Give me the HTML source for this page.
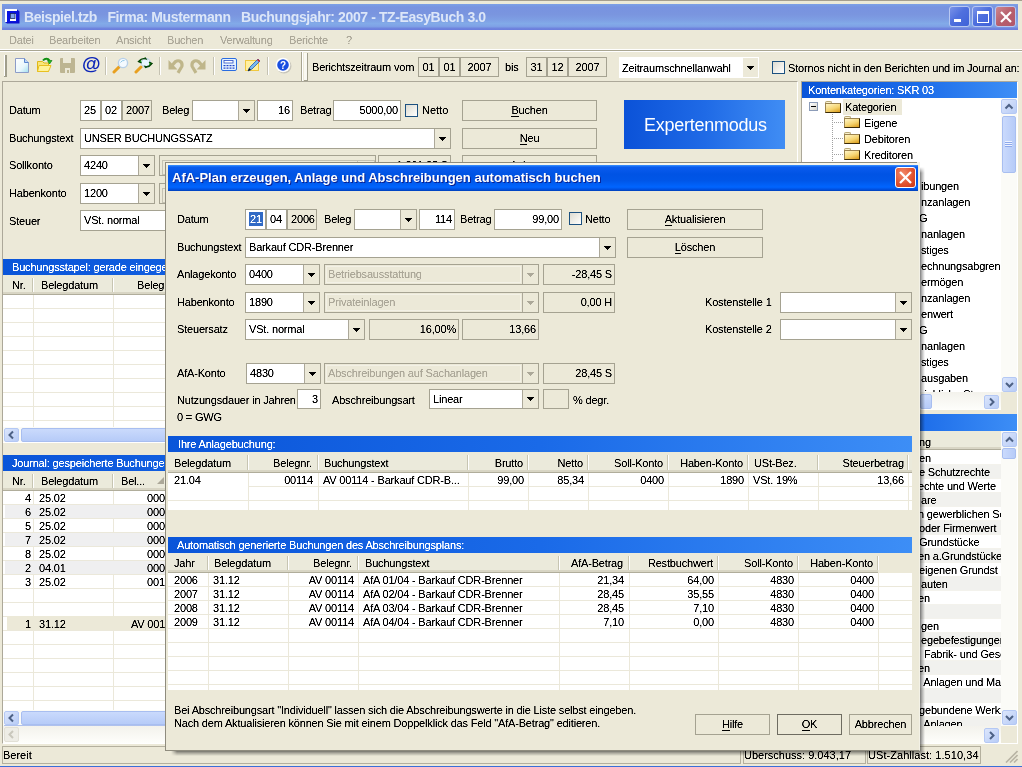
<!DOCTYPE html><html><head><meta charset="utf-8"><style>
*{margin:0;padding:0}
html,body{width:1022px;height:767px;overflow:hidden;background:#ECE9D8}
body{position:relative;font:11px "Liberation Sans",sans-serif;color:#000}
div{position:absolute}
.t{white-space:pre;line-height:13px;letter-spacing:-0.18px;filter:url(#thr)}
#root{left:0;top:0;width:1022px;height:767px;overflow:hidden;will-change:transform;background:#ECE9D8}
.fld{border:1px solid #A5A291;box-sizing:border-box}
.btn{border:1px solid #A5A291;box-sizing:border-box}
.btn.def{border-color:#6E6C61}
.tri{width:0;height:0;border-left:4px solid transparent;border-right:4px solid transparent;border-top:4px solid #000}
.chk{border:1px solid #1C5180;box-sizing:border-box;background:linear-gradient(135deg,#DCDBD2 0%,#F2F1EB 60%,#fff 100%)}
.bb{background:linear-gradient(90deg,#0A55D9 0%,#1A6AE8 50%,#3D8EF6 100%)}
.hdr{background:#EBEADB;border-bottom:1px solid #B0AD9B;box-sizing:border-box;box-shadow:inset 0 -2px 0 #D8D5C4}
u{text-decoration:none;border-bottom:1px solid #000}

.sbtn{background:linear-gradient(135deg,#DCE6FC,#B8CCF6);border:1px solid #B4C8F4;border-radius:2px;box-sizing:border-box}
.sthumb{background:linear-gradient(180deg,#CADAFC,#B6CBF8);border:1px solid #A8BEF0;border-radius:2px;box-sizing:border-box}
.sthumbv{background:linear-gradient(90deg,#CADAFC,#B6CBF8);border:1px solid #A8BEF0;border-radius:2px;box-sizing:border-box}
</style></head><body><svg width="0" height="0" style="position:absolute"><filter id="thr"><feComponentTransfer><feFuncA type="linear" slope="1.8" intercept="-0.25"/></feComponentTransfer></filter></svg><div id="root"><div style="left:0px;top:0px;width:1022px;height:1px;background:#A59E8E"></div>
<div style="left:2px;top:4px;width:1016px;height:26px;background:linear-gradient(180deg,#7CA0E6 0%,#7893E0 12%,#7A95DF 40%,#7E9FE4 62%,#82AAE8 75%,#7FA2E6 86%,#6F84DE 94%,#6A7CDC 100%)"></div>
<svg style="position:absolute;left:4px;top:8px" width="16" height="16" viewBox="0 0 16 16"><path d="M13 1.5L15.5 3.5V15.5H3L1 14H13Z" fill="#0A0ED0"/><rect x="1" y="1" width="12" height="13" fill="#fff"/><rect x="3" y="3" width="10" height="11" fill="#0A14E0"/><rect x="6" y="6" width="6" height="7" fill="#fff"/><rect x="6.5" y="5.5" width="4.5" height="5" fill="#7FA0EC" stroke="#1A2860" stroke-width=".8"/></svg>
<div style="left:24px;top:9px;white-space:pre;font:bold 14px 'Liberation Sans';letter-spacing:-0.4px;line-height:16px;color:#DCE6F8">Beispiel.tzb   Firma: Mustermann   Buchungsjahr: 2007 - TZ-EasyBuch 3.0</div>
<div style="left:949px;top:6px;width:21px;height:21px;background:linear-gradient(135deg,#7A93E8 0%,#4F70DE 45%,#3F62D8 100%);border:1px solid #B8C8F2;border-radius:3px;box-sizing:border-box"></div>
<div style="left:972px;top:6px;width:21px;height:21px;background:linear-gradient(135deg,#7A93E8 0%,#4F70DE 45%,#3F62D8 100%);border:1px solid #B8C8F2;border-radius:3px;box-sizing:border-box"></div>
<div style="left:995px;top:6px;width:21px;height:21px;background:linear-gradient(135deg,#CC8890 0%,#B85F6C 50%,#B0586A 100%);border:1px solid #B8C8F2;border-radius:3px;box-sizing:border-box"></div>
<div style="left:954px;top:19px;width:7px;height:3px;background:#fff"></div>
<div style="left:977px;top:11px;width:12px;height:12px;border:1px solid #fff;border-top-width:3px;box-sizing:border-box"></div>
<svg style="position:absolute;left:1000px;top:11px" width="12" height="12" viewBox="0 0 12 12"><g stroke="#fff" stroke-width="2.2"><line x1="1" y1="1" x2="11" y2="11"/><line x1="11" y1="1" x2="1" y2="11"/></g></svg>
<div class="t" style="left:9px;top:34px;color:#ACA899">Datei</div>
<div class="t" style="left:49px;top:34px;color:#ACA899">Bearbeiten</div>
<div class="t" style="left:116px;top:34px;color:#ACA899">Ansicht</div>
<div class="t" style="left:167px;top:34px;color:#ACA899">Buchen</div>
<div class="t" style="left:220px;top:34px;color:#ACA899">Verwaltung</div>
<div class="t" style="left:289px;top:34px;color:#ACA899">Berichte</div>
<div class="t" style="left:346px;top:34px;color:#ACA899">?</div>
<div style="left:0px;top:49px;width:1022px;height:1px;background:#fff"></div>
<div style="left:0px;top:50px;width:1022px;height:1px;background:#A9A692"></div>
<div style="left:0px;top:51px;width:1022px;height:1px;background:#fff"></div>
<div style="left:4px;top:55px;width:1px;height:21px;background:#fff"></div>
<div style="left:5px;top:55px;width:2px;height:22px;background:#A09E8C"></div>
<div style="left:4px;top:76px;width:3px;height:1px;background:#A09E8C"></div>
<div style="left:105px;top:57px;width:1px;height:18px;background:#C5C2B2"></div>
<div style="left:106px;top:57px;width:1px;height:18px;background:#fff"></div>
<div style="left:159px;top:57px;width:1px;height:18px;background:#C5C2B2"></div>
<div style="left:160px;top:57px;width:1px;height:18px;background:#fff"></div>
<div style="left:213px;top:57px;width:1px;height:18px;background:#C5C2B2"></div>
<div style="left:214px;top:57px;width:1px;height:18px;background:#fff"></div>
<div style="left:267px;top:57px;width:1px;height:18px;background:#C5C2B2"></div>
<div style="left:268px;top:57px;width:1px;height:18px;background:#fff"></div>
<div style="left:301px;top:52px;width:1px;height:29px;background:#A8A590"></div>
<div style="left:302px;top:52px;width:1px;height:29px;background:#fff"></div>
<div style="left:304px;top:53px;width:3px;height:27px;background:#FAF9F2;border-right:1px solid #A09E8C;border-bottom:1px solid #A09E8C;box-sizing:content-box"></div>
<svg style="position:absolute;left:14px;top:57px" width="16" height="17" viewBox="0 0 16 17"><defs><linearGradient id="gd" x1="0" y1="0" x2="1" y2="1"><stop offset="0" stop-color="#fff"/><stop offset=".6" stop-color="#E8F6FC"/><stop offset="1" stop-color="#9EE0F0"/></linearGradient></defs><path d="M1.5 1.5H10.5L14.5 5.5V15.5H1.5Z" fill="url(#gd)" stroke="#8C9CC8"/><path d="M10.5 1.5V5.5H14.5" fill="#BCD4F4" stroke="#5A86D0"/></svg>
<svg style="position:absolute;left:36px;top:57px" width="17" height="16" viewBox="0 0 17 16"><path d="M1.5 4.5H6.5L8 6H12.5V14.5H1.5Z" fill="#F8E67A" stroke="#E0B818"/><path d="M3 8.5H15L12.5 14.5H1.5Z" fill="#FFF39A" stroke="#E8C020"/><path d="M7 3.5C9 1 12 1 13.5 3.5" fill="none" stroke="#109010" stroke-width="2"/><path d="M11.5 3.5H16L13.5 7Z" fill="#20C020" stroke="#108010" stroke-width=".7"/></svg>
<svg style="position:absolute;left:60px;top:58px" width="15" height="15" viewBox="0 0 15 15"><path d="M0 1Q0 0 1 0H3V5H11V0H14Q15 0 15 1V14Q15 15 14 15H1Q0 15 0 14Z" fill="#BDB592"/><path d="M5 10H10V15H5Z" fill="#ECE9D8"/><path d="M7 12H9V15H7Z" fill="#BDB592"/></svg>
<div style="left:82px;top:54px;font:bold 19px 'Liberation Sans';color:#0B24B8;line-height:20px;letter-spacing:0">@</div>
<svg style="position:absolute;left:112px;top:57px" width="17" height="17" viewBox="0 0 17 17"><line x1="2" y1="15" x2="7" y2="10" stroke="#E8A020" stroke-width="3" stroke-linecap="round"/><circle cx="11" cy="6" r="4.6" fill="#F4FAFF" stroke="#B8D0E8" stroke-width="1.4"/><path d="M8.5 5.5Q10 3 12.5 3.5" stroke="#90C8E8" fill="none"/></svg>
<svg style="position:absolute;left:134px;top:57px" width="19" height="17" viewBox="0 0 19 17"><line x1="2" y1="15" x2="7" y2="10" stroke="#E8A020" stroke-width="3" stroke-linecap="round"/><circle cx="12" cy="6" r="4.6" fill="#E8F6FF" stroke="#B8D0E8" stroke-width="1"/><path d="M5 4Q8 0.5 12 2L11 0.5M7 2.5L4.5 4.5L7.5 6" fill="#18B018" stroke="#064006" stroke-width="1.3"/><path d="M17.5 7Q15 10.5 11 9.5L12 11M15.5 8.5L18 6.5L15 5" fill="#18B018" stroke="#064006" stroke-width="1.3"/></svg>
<svg style="position:absolute;left:168px;top:58px" width="16" height="16" viewBox="0 0 16 16"><path d="M0.5 2V11.5H9.5Z" fill="#BFB68A"/><path d="M3.5 8L7.5 3.6Q9.5 2.3 11.5 3Q14.8 4.5 13.8 8.5L10 14.8" fill="none" stroke="#BFB68A" stroke-width="3.2"/></svg>
<svg style="position:absolute;left:190px;top:58px" width="16" height="16" viewBox="0 0 16 16"><g transform="translate(16,0) scale(-1,1)"><path d="M0.5 2V11.5H9.5Z" fill="#BFB68A"/><path d="M3.5 8L7.5 3.6Q9.5 2.3 11.5 3Q14.8 4.5 13.8 8.5L10 14.8" fill="none" stroke="#BFB68A" stroke-width="3.2"/></g></svg>
<svg style="position:absolute;left:221px;top:58px" width="17" height="14" viewBox="0 0 17 14"><rect x=".5" y=".5" width="15" height="12" rx="1.5" fill="#E4F2FF" stroke="#2A6CE0"/><rect x="3" y="2.5" width="9" height="2.5" fill="#fff" stroke="#2A50C8" stroke-width=".8"/><g fill="#2244C8"><rect x="2.5" y="7" width="2" height="1.2"/><rect x="5.5" y="7" width="2" height="1.2"/><rect x="8.5" y="7" width="2" height="1.2"/><rect x="11.5" y="7" width="2" height="1.2"/><rect x="2.5" y="9.5" width="2" height="1.2"/><rect x="5.5" y="9.5" width="2" height="1.2"/><rect x="8.5" y="9.5" width="2" height="1.2"/><rect x="11.5" y="9.5" width="2" height="1.2"/></g></svg>
<svg style="position:absolute;left:245px;top:57px" width="16" height="16" viewBox="0 0 16 16"><rect x=".5" y="3.5" width="13" height="10" fill="#FFF0A0" stroke="#F0C840"/><path d="M3 14L5 10L13 2L15 4L7 12Z" fill="#7CB8F0" stroke="#2060B0" stroke-width=".8"/><path d="M12 3L13 2L15 4L14 5Z" fill="#E02020"/><path d="M3 14L4 11L6 13Z" fill="#101010"/></svg>
<svg style="position:absolute;left:275px;top:57px" width="17" height="17" viewBox="0 0 17 17"><circle cx="9" cy="9" r="7.5" fill="#888" opacity=".35"/><circle cx="8" cy="8" r="7.3" fill="#fff"/><circle cx="8" cy="8" r="5.8" fill="#1A4FE0"/><text x="8" y="11.6" font-family="Liberation Sans" font-weight="bold" font-size="10" fill="#fff" text-anchor="middle">?</text></svg>
<div class="t" style="left:312px;top:61px;">Berichtszeitraum vom</div>
<div class="fld" style="left:418px;top:57px;width:21px;height:20px;background:#ECE9D8;"></div>
<div class="t" style="left:418px;width:21px;text-align:center;top:61px;color:#000">01</div>
<div class="fld" style="left:439px;top:57px;width:21px;height:20px;background:#ECE9D8;"></div>
<div class="t" style="left:439px;width:21px;text-align:center;top:61px;color:#000">01</div>
<div class="fld" style="left:460px;top:57px;width:39px;height:20px;background:#ECE9D8;"></div>
<div class="t" style="left:460px;width:39px;text-align:center;top:61px;color:#000">2007</div>
<div class="t" style="left:505px;top:61px;">bis</div>
<div class="fld" style="left:526px;top:57px;width:21px;height:20px;background:#ECE9D8;"></div>
<div class="t" style="left:526px;width:21px;text-align:center;top:61px;color:#000">31</div>
<div class="fld" style="left:547px;top:57px;width:21px;height:20px;background:#ECE9D8;"></div>
<div class="t" style="left:547px;width:21px;text-align:center;top:61px;color:#000">12</div>
<div class="fld" style="left:568px;top:57px;width:39px;height:20px;background:#ECE9D8;"></div>
<div class="t" style="left:568px;width:39px;text-align:center;top:61px;color:#000">2007</div>
<div style="left:619px;top:57px;width:140px;height:21px;background:#fff"></div>
<div class="t" style="left:622px;top:62px;">Zeitraumschnellanwahl</div>
<div style="left:743px;top:58px;width:15px;height:19px;background:#ECE9D8"></div>
<div style="left:747px;top:66px;width:7px;height:1px;background:#000"></div>
<div style="left:748px;top:67px;width:5px;height:1px;background:#000"></div>
<div style="left:749px;top:68px;width:3px;height:1px;background:#000"></div>
<div style="left:750px;top:69px;width:1px;height:1px;background:#000"></div>
<div class="chk" style="left:772px;top:61px;width:13px;height:13px;"></div>
<div class="t" style="left:788px;top:62px;">Stornos nicht in den Berichten und im Journal an:</div>
<div style="left:2px;top:81px;width:796px;height:663px;border:1px solid #ACA899;border-right-color:#fff;border-bottom-color:#fff;box-sizing:border-box"></div>
<div class="t" style="left:9px;top:104px;">Datum</div>
<div class="fld" style="left:80px;top:100px;width:21px;height:21px;background:#fff;"></div>
<div class="t" style="left:84px;top:104px;color:#000">25</div>
<div class="fld" style="left:101px;top:100px;width:21px;height:21px;background:#fff;"></div>
<div class="t" style="left:105px;top:104px;color:#000">02</div>
<div class="fld" style="left:122px;top:100px;width:30px;height:21px;background:#ECE9D8;"></div>
<div class="t" style="left:126px;top:104px;color:#000">2007</div>
<div class="t" style="left:162px;top:104px;">Beleg</div>
<div class="fld" style="left:192px;top:100px;width:63px;height:21px;background:#fff;"></div>
<div style="left:238px;top:101px;width:16px;height:19px;background:#ECE9D8;border-left:1px solid #ACA899;box-sizing:border-box"></div>
<div style="left:243px;top:109px;width:7px;height:1px;background:#000"></div>
<div style="left:244px;top:110px;width:5px;height:1px;background:#000"></div>
<div style="left:245px;top:111px;width:3px;height:1px;background:#000"></div>
<div style="left:246px;top:112px;width:1px;height:1px;background:#000"></div>
<div class="fld" style="left:257px;top:100px;width:36px;height:21px;background:#fff;"></div>
<div class="t" style="right:732px;top:104px;color:#000">16</div>
<div class="t" style="left:300px;top:104px;">Betrag</div>
<div class="fld" style="left:333px;top:100px;width:68px;height:21px;background:#fff;"></div>
<div class="t" style="right:624px;top:104px;color:#000">5000,00</div>
<div class="chk" style="left:405px;top:104px;width:13px;height:13px;"></div>
<div class="t" style="left:422px;top:104px;letter-spacing:0">Netto</div>
<div class="btn" style="left:462px;top:100px;width:135px;height:21px;background:#ECE9D8;"></div>
<div class="t" style="left:462px;width:135px;text-align:center;top:104px;"><u>B</u>uchen</div>
<div style="left:624px;top:100px;width:161px;height:49px;background:linear-gradient(90deg,#0B52D8 0%,#1F6AE6 50%,#408DF4 100%)"></div>
<div style="left:644px;top:115px;white-space:pre;font:18px 'Liberation Sans';letter-spacing:-0.25px;line-height:20px;color:#fff">Expertenmodus</div>
<div class="t" style="left:9px;top:132px;">Buchungstext</div>
<div class="fld" style="left:80px;top:128px;width:371px;height:21px;background:#fff;"></div>
<div style="left:434px;top:129px;width:16px;height:19px;background:#ECE9D8;border-left:1px solid #ACA899;box-sizing:border-box"></div>
<div style="left:439px;top:137px;width:7px;height:1px;background:#000"></div>
<div style="left:440px;top:138px;width:5px;height:1px;background:#000"></div>
<div style="left:441px;top:139px;width:3px;height:1px;background:#000"></div>
<div style="left:442px;top:140px;width:1px;height:1px;background:#000"></div>
<div class="t" style="left:84px;top:132px;color:#000">UNSER BUCHUNGSSATZ</div>
<div class="btn" style="left:462px;top:128px;width:135px;height:21px;background:#ECE9D8;"></div>
<div class="t" style="left:462px;width:135px;text-align:center;top:132px;"><u>N</u>eu</div>
<div class="t" style="left:9px;top:159px;">Sollkonto</div>
<div class="fld" style="left:80px;top:155px;width:75px;height:21px;background:#fff;"></div>
<div style="left:138px;top:156px;width:16px;height:19px;background:#ECE9D8;border-left:1px solid #ACA899;box-sizing:border-box"></div>
<div style="left:143px;top:164px;width:7px;height:1px;background:#000"></div>
<div style="left:144px;top:165px;width:5px;height:1px;background:#000"></div>
<div style="left:145px;top:166px;width:3px;height:1px;background:#000"></div>
<div style="left:146px;top:167px;width:1px;height:1px;background:#000"></div>
<div class="t" style="left:84px;top:159px;color:#000">4240</div>
<div class="fld" style="left:159px;top:155px;width:217px;height:21px;background:#ECE9D8"></div>
<div style="left:162px;top:160px;width:194px;height:13px;border:1px solid #C5C2B2"></div>
<div style="left:357px;top:160px;width:16px;height:13px;border:1px solid #C5C2B2"></div>
<div class="fld" style="left:378px;top:155px;width:73px;height:21px;background:#ECE9D8;"></div>
<div class="t" style="right:574px;top:159px;color:#000">1.861,25 S</div>
<div class="btn" style="left:462px;top:155px;width:135px;height:21px;background:#ECE9D8;"></div>
<div class="t" style="left:462px;width:135px;text-align:center;top:159px;">Anlegen</div>
<div class="t" style="left:624px;top:160px;">Kostenstelle 1</div>
<div class="t" style="left:9px;top:187px;">Habenkonto</div>
<div class="fld" style="left:80px;top:183px;width:75px;height:21px;background:#fff;"></div>
<div style="left:138px;top:184px;width:16px;height:19px;background:#ECE9D8;border-left:1px solid #ACA899;box-sizing:border-box"></div>
<div style="left:143px;top:192px;width:7px;height:1px;background:#000"></div>
<div style="left:144px;top:193px;width:5px;height:1px;background:#000"></div>
<div style="left:145px;top:194px;width:3px;height:1px;background:#000"></div>
<div style="left:146px;top:195px;width:1px;height:1px;background:#000"></div>
<div class="t" style="left:84px;top:187px;color:#000">1200</div>
<div class="fld" style="left:159px;top:183px;width:217px;height:21px;background:#ECE9D8"></div>
<div style="left:162px;top:188px;width:11px;height:13px;border:1px solid #C5C2B2"></div>
<div class="t" style="left:9px;top:215px;">Steuer</div>
<div class="fld" style="left:80px;top:210px;width:221px;height:21px;background:#fff;"></div>
<div style="left:284px;top:211px;width:16px;height:19px;background:#ECE9D8;border-left:1px solid #ACA899;box-sizing:border-box"></div>
<div style="left:289px;top:219px;width:7px;height:1px;background:#000"></div>
<div style="left:290px;top:220px;width:5px;height:1px;background:#000"></div>
<div style="left:291px;top:221px;width:3px;height:1px;background:#000"></div>
<div style="left:292px;top:222px;width:1px;height:1px;background:#000"></div>
<div class="t" style="left:84px;top:214px;color:#000">VSt. normal</div>
<div class="bb" style="left:3px;top:259px;width:794px;height:16px;"></div>
<div class="t" style="left:12px;top:261px;color:#fff">Buchungsstapel: gerade eingegebene Buchungen</div>
<div class="hdr" style="left:3px;top:275px;width:794px;height:20px;"></div>
<div style="left:32px;top:278px;width:1px;height:14px;background:#C7C5B2"></div>
<div style="left:33px;top:278px;width:1px;height:14px;background:#fff"></div>
<div style="left:112px;top:278px;width:1px;height:14px;background:#C7C5B2"></div>
<div style="left:113px;top:278px;width:1px;height:14px;background:#fff"></div>
<div style="left:300px;top:278px;width:1px;height:14px;background:#C7C5B2"></div>
<div style="left:301px;top:278px;width:1px;height:14px;background:#fff"></div>
<div class="t" style="left:12px;top:279px;">Nr.</div>
<div class="t" style="left:41px;top:279px;">Belegdatum</div>
<div class="t" style="right:846px;top:279px;">Belegnr.</div>
<div style="left:3px;top:295px;width:794px;height:132px;background:#fff"></div>
<div style="left:3px;top:308px;width:794px;height:1px;background:#EBE8DA"></div>
<div style="left:3px;top:322px;width:794px;height:1px;background:#EBE8DA"></div>
<div style="left:3px;top:336px;width:794px;height:1px;background:#EBE8DA"></div>
<div style="left:3px;top:350px;width:794px;height:1px;background:#EBE8DA"></div>
<div style="left:3px;top:364px;width:794px;height:1px;background:#EBE8DA"></div>
<div style="left:3px;top:378px;width:794px;height:1px;background:#EBE8DA"></div>
<div style="left:3px;top:392px;width:794px;height:1px;background:#EBE8DA"></div>
<div style="left:3px;top:406px;width:794px;height:1px;background:#EBE8DA"></div>
<div style="left:3px;top:420px;width:794px;height:1px;background:#EBE8DA"></div>
<div style="left:33px;top:295px;width:1px;height:132px;background:#EBE8DA"></div>
<div style="left:113px;top:295px;width:1px;height:132px;background:#EBE8DA"></div>
<div style="left:3px;top:427px;width:794px;height:16px;background:#FBFBF7"></div>
<div class="sbtn" style="left:4px;top:428px;width:15px;height:14px;"></div>
<svg style="position:absolute;left:4px;top:428px" width="15" height="14"><g transform="translate(7.5,7.0)"><polyline points="1.5,-3.5 -2,0 1.5,3.5" fill="none" stroke="#4D6185" stroke-width="2"/></g></svg>
<div style="left:4px;top:442px;width:793px;height:1px;background:#8FA8E8;opacity:.7"></div>
<div class="sthumb" style="left:21px;top:428px;width:770px;height:14px;"></div>
<div style="left:3px;top:442px;width:794px;height:1px;background:#fff"></div>
<div class="bb" style="left:3px;top:455px;width:794px;height:16px;"></div>
<div class="t" style="left:12px;top:457px;color:#fff">Journal: gespeicherte Buchungen</div>
<div class="hdr" style="left:3px;top:471px;width:794px;height:20px;"></div>
<div style="left:32px;top:474px;width:1px;height:14px;background:#C7C5B2"></div>
<div style="left:33px;top:474px;width:1px;height:14px;background:#fff"></div>
<div style="left:112px;top:474px;width:1px;height:14px;background:#C7C5B2"></div>
<div style="left:113px;top:474px;width:1px;height:14px;background:#fff"></div>
<div class="t" style="left:12px;top:475px;">Nr.</div>
<div class="t" style="left:41px;top:475px;">Belegdatum</div>
<div class="t" style="left:121px;top:475px;">Bel...</div>
<div style="left:157px;top:477px;width:0;height:0;border-left:7px solid transparent;border-bottom:7px solid #ACA899"></div>
<div style="left:3px;top:491px;width:794px;height:219px;background:#fff"></div>
<div style="left:33px;top:491px;width:1px;height:219px;background:#EBE8DA"></div>
<div style="left:113px;top:491px;width:1px;height:219px;background:#EBE8DA"></div>
<div style="left:3px;top:504px;width:794px;height:1px;background:#EBE8DA"></div>
<div class="t" style="right:991px;top:492px;">4</div>
<div class="t" style="left:39px;top:492px;">25.02</div>
<div class="t" style="left:147px;top:492px;">00014</div>
<div style="left:5px;top:505px;width:792px;height:13px;background:#EFEFF0"></div>
<div style="left:3px;top:518px;width:794px;height:1px;background:#EBE8DA"></div>
<div class="t" style="right:991px;top:506px;">6</div>
<div class="t" style="left:39px;top:506px;">25.02</div>
<div class="t" style="left:147px;top:506px;">00016</div>
<div style="left:3px;top:532px;width:794px;height:1px;background:#EBE8DA"></div>
<div class="t" style="right:991px;top:520px;">5</div>
<div class="t" style="left:39px;top:520px;">25.02</div>
<div class="t" style="left:147px;top:520px;">00015</div>
<div style="left:5px;top:533px;width:792px;height:13px;background:#EFEFF0"></div>
<div style="left:3px;top:546px;width:794px;height:1px;background:#EBE8DA"></div>
<div class="t" style="right:991px;top:534px;">7</div>
<div class="t" style="left:39px;top:534px;">25.02</div>
<div class="t" style="left:147px;top:534px;">00017</div>
<div style="left:3px;top:560px;width:794px;height:1px;background:#EBE8DA"></div>
<div class="t" style="right:991px;top:548px;">8</div>
<div class="t" style="left:39px;top:548px;">25.02</div>
<div class="t" style="left:147px;top:548px;">00018</div>
<div style="left:5px;top:561px;width:792px;height:13px;background:#EFEFF0"></div>
<div style="left:3px;top:574px;width:794px;height:1px;background:#EBE8DA"></div>
<div class="t" style="right:991px;top:562px;">2</div>
<div class="t" style="left:39px;top:562px;">04.01</div>
<div class="t" style="left:147px;top:562px;">00002</div>
<div style="left:3px;top:588px;width:794px;height:1px;background:#EBE8DA"></div>
<div class="t" style="right:991px;top:576px;">3</div>
<div class="t" style="left:39px;top:576px;">25.02</div>
<div class="t" style="left:147px;top:576px;">00103</div>
<div style="left:3px;top:602px;width:794px;height:1px;background:#EBE8DA"></div>
<div style="left:3px;top:616px;width:794px;height:1px;background:#EBE8DA"></div>
<div style="left:7px;top:616px;width:790px;height:14px;background:#ECE9D8"></div>
<div style="left:3px;top:630px;width:794px;height:1px;background:#EBE8DA"></div>
<div class="t" style="right:991px;top:618px;">1</div>
<div class="t" style="left:39px;top:618px;">31.12</div>
<div class="t" style="left:131px;top:618px;">AV 00114</div>
<div style="left:3px;top:644px;width:794px;height:1px;background:#EBE8DA"></div>
<div style="left:3px;top:658px;width:794px;height:1px;background:#EBE8DA"></div>
<div style="left:3px;top:672px;width:794px;height:1px;background:#EBE8DA"></div>
<div style="left:3px;top:686px;width:794px;height:1px;background:#EBE8DA"></div>
<div style="left:3px;top:700px;width:794px;height:1px;background:#EBE8DA"></div>
<div style="left:3px;top:710px;width:794px;height:16px;background:#FBFBF7"></div>
<div class="sbtn" style="left:4px;top:711px;width:15px;height:14px;"></div>
<svg style="position:absolute;left:4px;top:711px" width="15" height="14"><g transform="translate(7.5,7.0)"><polyline points="1.5,-3.5 -2,0 1.5,3.5" fill="none" stroke="#4D6185" stroke-width="2"/></g></svg>
<div style="left:4px;top:725px;width:793px;height:1px;background:#8FA8E8;opacity:.7"></div>
<div class="sthumb" style="left:21px;top:711px;width:770px;height:14px;"></div>
<div style="left:3px;top:726px;width:794px;height:17px;background:linear-gradient(180deg,#F3F2EC,#FEFEFB)"></div>
<div style="left:4px;top:727px;width:15px;height:15px;background:#EEEDE6;border:1px solid #E2E0D6;border-radius:2px;box-sizing:border-box"></div>
<svg style="position:absolute;left:4px;top:727px" width="15" height="15"><g transform="translate(7.5,7.5)"><polyline points="1.5,-3.5 -2,0 1.5,3.5" fill="none" stroke="#C9C7BC" stroke-width="2"/></g></svg>
<div style="left:801px;top:81px;width:217px;height:663px;border:1px solid #ACA899;border-right-color:#fff;border-bottom-color:#fff;box-sizing:border-box"></div>
<div class="bb" style="left:802px;top:82px;width:215px;height:16px;"></div>
<div class="t" style="left:808px;top:84px;color:#fff">Kontenkategorien: SKR 03</div>
<div style="left:802px;top:98px;width:199px;height:294px;background:#fff"></div>
<div style="left:809px;top:102px;width:9px;height:9px;border:1px solid #8C9CB8;background:linear-gradient(135deg,#fff,#D8D6CC);box-sizing:border-box"></div>
<div style="left:811px;top:106px;width:5px;height:1px;background:#000"></div>
<div style="left:843px;top:99px;width:59px;height:16px;background:#ECE9D8"></div>
<div class="t" style="left:845px;top:101px;">Kategorien</div>
<div style="left:825px;top:101px;width:7px;height:3px;background:#FBF3D0;border:1px solid #B8A878;border-bottom:none;border-radius:2px 2px 0 0;box-sizing:border-box"></div>
<div style="left:825px;top:103px;width:16px;height:10px;background:linear-gradient(160deg,#FFF6C8 0%,#F5D470 55%,#D99A18 100%);border:1px solid #9C8450;border-right-color:#3A2A08;border-bottom-color:#3A2A08;box-sizing:border-box"></div>
<div style="left:844px;top:116px;width:7px;height:3px;background:#FBF3D0;border:1px solid #B8A878;border-bottom:none;border-radius:2px 2px 0 0;box-sizing:border-box"></div>
<div style="left:844px;top:118px;width:16px;height:10px;background:linear-gradient(160deg,#FFF6C8 0%,#F5D470 55%,#D99A18 100%);border:1px solid #9C8450;border-right-color:#3A2A08;border-bottom-color:#3A2A08;box-sizing:border-box"></div>
<div class="t" style="left:864px;top:117px;">Eigene</div>
<div style="left:844px;top:132px;width:7px;height:3px;background:#FBF3D0;border:1px solid #B8A878;border-bottom:none;border-radius:2px 2px 0 0;box-sizing:border-box"></div>
<div style="left:844px;top:134px;width:16px;height:10px;background:linear-gradient(160deg,#FFF6C8 0%,#F5D470 55%,#D99A18 100%);border:1px solid #9C8450;border-right-color:#3A2A08;border-bottom-color:#3A2A08;box-sizing:border-box"></div>
<div class="t" style="left:864px;top:133px;">Debitoren</div>
<div style="left:844px;top:148px;width:7px;height:3px;background:#FBF3D0;border:1px solid #B8A878;border-bottom:none;border-radius:2px 2px 0 0;box-sizing:border-box"></div>
<div style="left:844px;top:150px;width:16px;height:10px;background:linear-gradient(160deg,#FFF6C8 0%,#F5D470 55%,#D99A18 100%);border:1px solid #9C8450;border-right-color:#3A2A08;border-bottom-color:#3A2A08;box-sizing:border-box"></div>
<div class="t" style="left:864px;top:149px;">Kreditoren</div>
<div style="left:832px;top:114px;width:1px;height:278px;background:repeating-linear-gradient(180deg,#A0A0A0 0 1px,transparent 1px 2px)"></div>
<div style="left:834px;top:122px;width:10px;height:1px;background:repeating-linear-gradient(90deg,#A0A0A0 0 1px,transparent 1px 2px)"></div>
<div style="left:834px;top:138px;width:10px;height:1px;background:repeating-linear-gradient(90deg,#A0A0A0 0 1px,transparent 1px 2px)"></div>
<div style="left:834px;top:154px;width:10px;height:1px;background:repeating-linear-gradient(90deg,#A0A0A0 0 1px,transparent 1px 2px)"></div>
<div style="left:834px;top:170px;width:10px;height:1px;background:repeating-linear-gradient(90deg,#A0A0A0 0 1px,transparent 1px 2px)"></div>
<div style="left:834px;top:186px;width:10px;height:1px;background:repeating-linear-gradient(90deg,#A0A0A0 0 1px,transparent 1px 2px)"></div>
<div style="left:834px;top:202px;width:10px;height:1px;background:repeating-linear-gradient(90deg,#A0A0A0 0 1px,transparent 1px 2px)"></div>
<div style="left:834px;top:218px;width:10px;height:1px;background:repeating-linear-gradient(90deg,#A0A0A0 0 1px,transparent 1px 2px)"></div>
<div style="left:834px;top:234px;width:10px;height:1px;background:repeating-linear-gradient(90deg,#A0A0A0 0 1px,transparent 1px 2px)"></div>
<div style="left:834px;top:250px;width:10px;height:1px;background:repeating-linear-gradient(90deg,#A0A0A0 0 1px,transparent 1px 2px)"></div>
<div style="left:834px;top:266px;width:10px;height:1px;background:repeating-linear-gradient(90deg,#A0A0A0 0 1px,transparent 1px 2px)"></div>
<div style="left:834px;top:282px;width:10px;height:1px;background:repeating-linear-gradient(90deg,#A0A0A0 0 1px,transparent 1px 2px)"></div>
<div style="left:834px;top:298px;width:10px;height:1px;background:repeating-linear-gradient(90deg,#A0A0A0 0 1px,transparent 1px 2px)"></div>
<div style="left:834px;top:314px;width:10px;height:1px;background:repeating-linear-gradient(90deg,#A0A0A0 0 1px,transparent 1px 2px)"></div>
<div style="left:834px;top:330px;width:10px;height:1px;background:repeating-linear-gradient(90deg,#A0A0A0 0 1px,transparent 1px 2px)"></div>
<div style="left:834px;top:346px;width:10px;height:1px;background:repeating-linear-gradient(90deg,#A0A0A0 0 1px,transparent 1px 2px)"></div>
<div style="left:834px;top:362px;width:10px;height:1px;background:repeating-linear-gradient(90deg,#A0A0A0 0 1px,transparent 1px 2px)"></div>
<div style="left:834px;top:378px;width:10px;height:1px;background:repeating-linear-gradient(90deg,#A0A0A0 0 1px,transparent 1px 2px)"></div>
<div style="left:834px;top:394px;width:10px;height:1px;background:repeating-linear-gradient(90deg,#A0A0A0 0 1px,transparent 1px 2px)"></div>
<div style="left:840px;top:180px;width:161px;height:14px;overflow:hidden"><div class="t" style="left:81px;top:0;">ibungen</div></div>
<div style="left:840px;top:196px;width:161px;height:14px;overflow:hidden"><div class="t" style="left:81px;top:0;">nzanlagen</div></div>
<div style="left:840px;top:212px;width:161px;height:14px;overflow:hidden"><div class="t" style="left:79px;top:0;">G</div></div>
<div style="left:840px;top:228px;width:161px;height:14px;overflow:hidden"><div class="t" style="left:81px;top:0;">nanlagen</div></div>
<div style="left:840px;top:244px;width:161px;height:14px;overflow:hidden"><div class="t" style="left:81px;top:0;">stiges</div></div>
<div style="left:840px;top:260px;width:161px;height:14px;overflow:hidden"><div class="t" style="left:81px;top:0;">echnungsabgrenzung</div></div>
<div style="left:840px;top:276px;width:161px;height:14px;overflow:hidden"><div class="t" style="left:81px;top:0;">ermögen</div></div>
<div style="left:840px;top:292px;width:161px;height:14px;overflow:hidden"><div class="t" style="left:81px;top:0;">nzanlagen</div></div>
<div style="left:840px;top:308px;width:161px;height:14px;overflow:hidden"><div class="t" style="left:81px;top:0;">enwert</div></div>
<div style="left:840px;top:324px;width:161px;height:14px;overflow:hidden"><div class="t" style="left:79px;top:0;">G</div></div>
<div style="left:840px;top:340px;width:161px;height:14px;overflow:hidden"><div class="t" style="left:81px;top:0;">nanlagen</div></div>
<div style="left:840px;top:356px;width:161px;height:14px;overflow:hidden"><div class="t" style="left:81px;top:0;">stiges</div></div>
<div style="left:840px;top:372px;width:161px;height:14px;overflow:hidden"><div class="t" style="left:81px;top:0;">ausgaben</div></div>
<div style="left:840px;top:388px;width:161px;height:14px;overflow:hidden"><div class="t" style="left:81px;top:0;">riebliche Steuern</div></div>
<div style="left:802px;top:392px;width:199px;height:18px;background:#ECE9D8"></div>
<div style="left:1001px;top:98px;width:16px;height:294px;background:#FBFBF7"></div>
<div class="sbtn" style="left:1001px;top:99px;width:16px;height:15px;"></div>
<svg style="position:absolute;left:1001px;top:99px" width="16" height="15"><g transform="translate(8.0,7.5)"><polyline points="-3.5,2 0,-1.5 3.5,2" fill="none" stroke="#4D6185" stroke-width="2"/></g></svg>
<div class="sthumbv" style="left:1002px;top:116px;width:14px;height:57px;"></div>
<div style="left:1005px;top:141px;width:7px;height:1px;background:#EEF3FF"></div>
<div style="left:1005px;top:142px;width:7px;height:1px;background:#8CA8EC"></div>
<div style="left:1005px;top:143px;width:7px;height:1px;background:#EEF3FF"></div>
<div style="left:1005px;top:144px;width:7px;height:1px;background:#8CA8EC"></div>
<div style="left:1005px;top:145px;width:7px;height:1px;background:#EEF3FF"></div>
<div style="left:1005px;top:146px;width:7px;height:1px;background:#8CA8EC"></div>
<div class="sbtn" style="left:1002px;top:377px;width:15px;height:15px;"></div>
<svg style="position:absolute;left:1002px;top:377px" width="15" height="15"><g transform="translate(7.5,7.5)"><polyline points="-3.5,-1.5 0,2 3.5,-1.5" fill="none" stroke="#4D6185" stroke-width="2"/></g></svg>
<div style="left:802px;top:392px;width:199px;height:18px;background:linear-gradient(180deg,#F3F2EC,#FEFEFB)"></div>
<div class="sthumb" style="left:920px;top:394px;width:12px;height:15px;"></div>
<div class="sbtn" style="left:984px;top:395px;width:15px;height:14px;"></div>
<svg style="position:absolute;left:984px;top:395px" width="15" height="14"><g transform="translate(7.5,7.0)"><polyline points="-1.5,-3.5 2,0 -1.5,3.5" fill="none" stroke="#4D6185" stroke-width="2"/></g></svg>
<div class="bb" style="left:802px;top:414px;width:215px;height:17px;"></div>
<div class="hdr" style="left:802px;top:431px;width:199px;height:19px;"></div>
<div class="t" style="left:919px;top:436px;">ng</div>
<div style="left:802px;top:450px;width:199px;height:276px;background:#fff"></div>
<div style="left:802px;top:464px;width:199px;height:1px;background:#F3F2EC"></div>
<div style="left:840px;top:452px;width:161px;height:14px;overflow:hidden"><div class="t" style="left:79px;top:0;">en</div></div>
<div style="left:802px;top:465px;width:199px;height:14px;background:#F1F1EE"></div>
<div style="left:802px;top:478px;width:199px;height:1px;background:#F3F2EC"></div>
<div style="left:840px;top:466px;width:161px;height:14px;overflow:hidden"><div class="t" style="left:79px;top:0;">e Schutzrechte</div></div>
<div style="left:802px;top:492px;width:199px;height:1px;background:#F3F2EC"></div>
<div style="left:840px;top:480px;width:161px;height:14px;overflow:hidden"><div class="t" style="left:78px;top:0;">echte und Werte</div></div>
<div style="left:802px;top:493px;width:199px;height:14px;background:#F1F1EE"></div>
<div style="left:802px;top:506px;width:199px;height:1px;background:#F3F2EC"></div>
<div style="left:840px;top:494px;width:161px;height:14px;overflow:hidden"><div class="t" style="left:81px;top:0;">are</div></div>
<div style="left:802px;top:520px;width:199px;height:1px;background:#F3F2EC"></div>
<div style="left:840px;top:508px;width:161px;height:14px;overflow:hidden"><div class="t" style="left:78px;top:0;">n gewerblichen Sc</div></div>
<div style="left:802px;top:521px;width:199px;height:14px;background:#F1F1EE"></div>
<div style="left:802px;top:534px;width:199px;height:1px;background:#F3F2EC"></div>
<div style="left:840px;top:522px;width:161px;height:14px;overflow:hidden"><div class="t" style="left:79px;top:0;">oder Firmenwert</div></div>
<div style="left:802px;top:548px;width:199px;height:1px;background:#F3F2EC"></div>
<div style="left:840px;top:536px;width:161px;height:14px;overflow:hidden"><div class="t" style="left:79px;top:0;">Grundstücke</div></div>
<div style="left:802px;top:549px;width:199px;height:14px;background:#F1F1EE"></div>
<div style="left:802px;top:562px;width:199px;height:1px;background:#F3F2EC"></div>
<div style="left:840px;top:550px;width:161px;height:14px;overflow:hidden"><div class="t" style="left:78px;top:0;">en a.Grundstücke</div></div>
<div style="left:802px;top:576px;width:199px;height:1px;background:#F3F2EC"></div>
<div style="left:840px;top:564px;width:161px;height:14px;overflow:hidden"><div class="t" style="left:79px;top:0;">eigenen Grundst</div></div>
<div style="left:802px;top:577px;width:199px;height:14px;background:#F1F1EE"></div>
<div style="left:802px;top:590px;width:199px;height:1px;background:#F3F2EC"></div>
<div style="left:840px;top:578px;width:161px;height:14px;overflow:hidden"><div class="t" style="left:81px;top:0;">auten</div></div>
<div style="left:802px;top:604px;width:199px;height:1px;background:#F3F2EC"></div>
<div style="left:840px;top:592px;width:161px;height:14px;overflow:hidden"><div class="t" style="left:78px;top:0;">en</div></div>
<div style="left:802px;top:605px;width:199px;height:14px;background:#F1F1EE"></div>
<div style="left:802px;top:618px;width:199px;height:1px;background:#F3F2EC"></div>
<div style="left:802px;top:632px;width:199px;height:1px;background:#F3F2EC"></div>
<div style="left:840px;top:620px;width:161px;height:14px;overflow:hidden"><div class="t" style="left:81px;top:0;">gen</div></div>
<div style="left:802px;top:633px;width:199px;height:14px;background:#F1F1EE"></div>
<div style="left:802px;top:646px;width:199px;height:1px;background:#F3F2EC"></div>
<div style="left:840px;top:634px;width:161px;height:14px;overflow:hidden"><div class="t" style="left:81px;top:0;">egebefestigungen</div></div>
<div style="left:802px;top:660px;width:199px;height:1px;background:#F3F2EC"></div>
<div style="left:840px;top:648px;width:161px;height:14px;overflow:hidden"><div class="t" style="left:81px;top:0;"> Fabrik- und Gesc</div></div>
<div style="left:802px;top:661px;width:199px;height:14px;background:#F1F1EE"></div>
<div style="left:802px;top:674px;width:199px;height:1px;background:#F3F2EC"></div>
<div style="left:840px;top:662px;width:161px;height:14px;overflow:hidden"><div class="t" style="left:78px;top:0;">en</div></div>
<div style="left:802px;top:688px;width:199px;height:1px;background:#F3F2EC"></div>
<div style="left:840px;top:676px;width:161px;height:14px;overflow:hidden"><div class="t" style="left:81px;top:0;"> Anlagen und Ma</div></div>
<div style="left:802px;top:689px;width:199px;height:14px;background:#F1F1EE"></div>
<div style="left:802px;top:702px;width:199px;height:1px;background:#F3F2EC"></div>
<div style="left:802px;top:716px;width:199px;height:1px;background:#F3F2EC"></div>
<div style="left:840px;top:704px;width:161px;height:14px;overflow:hidden"><div class="t" style="left:79px;top:0;">gebundene Werkz</div></div>
<div style="left:802px;top:717px;width:199px;height:14px;background:#F1F1EE"></div>
<div style="left:802px;top:730px;width:199px;height:1px;background:#F3F2EC"></div>
<div style="left:840px;top:718px;width:161px;height:14px;overflow:hidden"><div class="t" style="left:81px;top:0;"> Anlagen</div></div>
<div style="left:1001px;top:431px;width:16px;height:295px;background:#FBFBF7"></div>
<div class="sbtn" style="left:1002px;top:432px;width:15px;height:15px;"></div>
<svg style="position:absolute;left:1002px;top:432px" width="15" height="15"><g transform="translate(7.5,7.5)"><polyline points="-3.5,2 0,-1.5 3.5,2" fill="none" stroke="#4D6185" stroke-width="2"/></g></svg>
<div class="sthumbv" style="left:1002px;top:448px;width:14px;height:11px;"></div>
<div class="sbtn" style="left:1002px;top:710px;width:15px;height:15px;"></div>
<svg style="position:absolute;left:1002px;top:710px" width="15" height="15"><g transform="translate(7.5,7.5)"><polyline points="-3.5,-1.5 0,2 3.5,-1.5" fill="none" stroke="#4D6185" stroke-width="2"/></g></svg>
<div style="left:802px;top:726px;width:199px;height:17px;background:linear-gradient(180deg,#F3F2EC,#FEFEFB)"></div>
<div class="sbtn" style="left:984px;top:728px;width:15px;height:15px;"></div>
<svg style="position:absolute;left:984px;top:728px" width="15" height="15"><g transform="translate(7.5,7.5)"><polyline points="-1.5,-3.5 2,0 -1.5,3.5" fill="none" stroke="#4D6185" stroke-width="2"/></g></svg>
<div style="left:1001px;top:726px;width:16px;height:17px;background:#ECE9D8"></div>
<div style="left:2px;top:746px;width:739px;height:18px;border:1px solid #B4B09E;box-sizing:border-box"></div>
<div class="t" style="left:3px;top:749px;letter-spacing:0">Bereit</div>
<div style="left:743px;top:746px;width:123px;height:18px;border:1px solid #B4B09E;box-sizing:border-box"></div>
<div class="t" style="left:744px;top:749px;letter-spacing:0">Überschuss: 9.043,17</div>
<div style="left:867px;top:746px;width:114px;height:18px;border:1px solid #B4B09E;box-sizing:border-box"></div>
<div class="t" style="left:868px;top:749px;letter-spacing:0.05px">USt-Zahllast: 1.510,34</div>
<svg style="position:absolute;left:1004px;top:750px" width="14" height="13" viewBox="0 0 14 13"><g stroke="#B8B4A4" stroke-width="1.6"><line x1="2" y1="12.5" x2="13.5" y2="1"/><line x1="6" y1="12.5" x2="13.5" y2="5"/><line x1="10" y1="12.5" x2="13.5" y2="9"/></g></svg>
<div style="left:0px;top:766px;width:1022px;height:1px;background:#3A6FD8"></div>
<div style="left:920px;top:167px;width:5px;height:584px;background:linear-gradient(90deg,rgba(0,0,0,.5),rgba(0,0,0,.28) 40%,rgba(0,0,0,0));-webkit-mask:linear-gradient(180deg,transparent,#000 6px)"></div>
<div style="left:171px;top:751px;width:749px;height:5px;background:linear-gradient(180deg,rgba(0,0,0,.5),rgba(0,0,0,.28) 40%,rgba(0,0,0,0));-webkit-mask:linear-gradient(90deg,transparent,#000 6px)"></div>
<div style="left:920px;top:751px;width:5px;height:5px;background:radial-gradient(circle at 0 0,rgba(0,0,0,.45),rgba(0,0,0,.2) 50%,rgba(0,0,0,0) 80%)"></div>
<div style="left:165px;top:162px;width:755px;height:589px;background:#ECE9D8;border:1px solid #8F8C7E;border-right-color:#F3F1E6;box-sizing:border-box"></div>
<div style="left:917px;top:162px;width:3px;height:1px;background:#F3F1E6"></div>
<div style="left:166px;top:163px;width:753px;height:2px;background:#F7F5EA"></div>
<div style="left:168px;top:165px;width:750px;height:26px;background:linear-gradient(180deg,#3D95FF 0%,#0A5CEE 8%,#0053E4 35%,#0056E8 60%,#0065FF 85%,#0050E0 94%,#0040B8 100%)"></div>
<div style="left:172px;top:170px;white-space:pre;font:bold 13px 'Liberation Sans';line-height:16px;color:#fff;text-shadow:1px 1px 0 #0A1E8C">AfA-Plan erzeugen, Anlage und Abschreibungen automatisch buchen</div>
<div style="left:895px;top:167px;width:21px;height:21px;background:radial-gradient(circle at 35% 30%,#F28A6A,#E0502C 60%,#C83818);border:1px solid #fff;border-radius:3px;box-sizing:border-box"></div>
<svg style="position:absolute;left:899px;top:171px" width="13" height="13" viewBox="0 0 13 13"><g stroke="#fff" stroke-width="2.3" stroke-linecap="square"><line x1="1.8" y1="1.8" x2="11.2" y2="11.2"/><line x1="11.2" y1="1.8" x2="1.8" y2="11.2"/></g></svg>
<div class="t" style="left:177px;top:213px;">Datum</div>
<div class="fld" style="left:245px;top:209px;width:21px;height:21px;background:#fff;"></div>
<div style="left:249px;top:212px;width:14px;height:14px;background:#316AC5"></div>
<div class="t" style="left:250px;top:213px;color:#fff">21</div>
<div class="fld" style="left:266px;top:209px;width:21px;height:21px;background:#fff;"></div>
<div class="t" style="left:270px;top:213px;color:#000">04</div>
<div class="fld" style="left:287px;top:209px;width:30px;height:21px;background:#ECE9D8;"></div>
<div class="t" style="left:291px;top:213px;color:#000">2006</div>
<div class="t" style="left:324px;top:213px;">Beleg</div>
<div class="fld" style="left:354px;top:209px;width:63px;height:21px;background:#fff;"></div>
<div style="left:400px;top:210px;width:16px;height:19px;background:#ECE9D8;border-left:1px solid #ACA899;box-sizing:border-box"></div>
<div style="left:405px;top:218px;width:7px;height:1px;background:#000"></div>
<div style="left:406px;top:219px;width:5px;height:1px;background:#000"></div>
<div style="left:407px;top:220px;width:3px;height:1px;background:#000"></div>
<div style="left:408px;top:221px;width:1px;height:1px;background:#000"></div>
<div class="fld" style="left:419px;top:209px;width:36px;height:21px;background:#fff;"></div>
<div class="t" style="right:570px;top:213px;color:#000">114</div>
<div class="t" style="left:460px;top:213px;">Betrag</div>
<div class="fld" style="left:494px;top:209px;width:68px;height:21px;background:#fff;"></div>
<div class="t" style="right:463px;top:213px;color:#000">99,00</div>
<div class="chk" style="left:569px;top:212px;width:13px;height:13px;"></div>
<div class="t" style="left:585px;top:213px;">Netto</div>
<div class="btn" style="left:627px;top:209px;width:136px;height:21px;background:#ECE9D8;"></div>
<div class="t" style="left:627px;width:136px;text-align:center;top:213px;"><u>A</u>ktualisieren</div>
<div class="t" style="left:177px;top:241px;">Buchungstext</div>
<div class="fld" style="left:245px;top:237px;width:371px;height:21px;background:#fff;"></div>
<div style="left:599px;top:238px;width:16px;height:19px;background:#ECE9D8;border-left:1px solid #ACA899;box-sizing:border-box"></div>
<div style="left:604px;top:246px;width:7px;height:1px;background:#000"></div>
<div style="left:605px;top:247px;width:5px;height:1px;background:#000"></div>
<div style="left:606px;top:248px;width:3px;height:1px;background:#000"></div>
<div style="left:607px;top:249px;width:1px;height:1px;background:#000"></div>
<div class="t" style="left:249px;top:241px;color:#000">Barkauf CDR-Brenner</div>
<div class="btn" style="left:627px;top:237px;width:136px;height:21px;background:#ECE9D8;"></div>
<div class="t" style="left:627px;width:136px;text-align:center;top:241px;"><u>L</u>öschen</div>
<div class="t" style="left:177px;top:268px;">Anlagekonto</div>
<div class="fld" style="left:245px;top:264px;width:75px;height:21px;background:#fff;"></div>
<div style="left:303px;top:265px;width:16px;height:19px;background:#ECE9D8;border-left:1px solid #ACA899;box-sizing:border-box"></div>
<div style="left:308px;top:273px;width:7px;height:1px;background:#000"></div>
<div style="left:309px;top:274px;width:5px;height:1px;background:#000"></div>
<div style="left:310px;top:275px;width:3px;height:1px;background:#000"></div>
<div style="left:311px;top:276px;width:1px;height:1px;background:#000"></div>
<div class="t" style="left:249px;top:268px;color:#000">0400</div>
<div class="fld" style="left:324px;top:264px;width:215px;height:21px;background:#ECE9D8;"></div>
<div style="left:326px;top:266px;width:195px;height:17px;background:#ECE9D8;border:1px solid #F3F1E6;box-sizing:border-box"></div>
<div style="left:522px;top:265px;width:16px;height:19px;background:#ECE9D8;border-left:1px solid #ACA899;box-sizing:border-box"></div>
<div style="left:527px;top:273px;width:7px;height:1px;background:#ACA899"></div>
<div style="left:528px;top:274px;width:5px;height:1px;background:#ACA899"></div>
<div style="left:529px;top:275px;width:3px;height:1px;background:#ACA899"></div>
<div style="left:530px;top:276px;width:1px;height:1px;background:#ACA899"></div>
<div class="t" style="left:328px;top:268px;color:#ACA899">Betriebsausstattung</div>
<div class="fld" style="left:543px;top:264px;width:72px;height:21px;background:#ECE9D8;"></div>
<div class="t" style="right:410px;top:268px;color:#000">-28,45 S</div>
<div class="t" style="left:177px;top:296px;">Habenkonto</div>
<div class="fld" style="left:245px;top:292px;width:75px;height:21px;background:#fff;"></div>
<div style="left:303px;top:293px;width:16px;height:19px;background:#ECE9D8;border-left:1px solid #ACA899;box-sizing:border-box"></div>
<div style="left:308px;top:301px;width:7px;height:1px;background:#000"></div>
<div style="left:309px;top:302px;width:5px;height:1px;background:#000"></div>
<div style="left:310px;top:303px;width:3px;height:1px;background:#000"></div>
<div style="left:311px;top:304px;width:1px;height:1px;background:#000"></div>
<div class="t" style="left:249px;top:296px;color:#000">1890</div>
<div class="fld" style="left:324px;top:292px;width:215px;height:21px;background:#ECE9D8;"></div>
<div style="left:326px;top:294px;width:195px;height:17px;background:#ECE9D8;border:1px solid #F3F1E6;box-sizing:border-box"></div>
<div style="left:522px;top:293px;width:16px;height:19px;background:#ECE9D8;border-left:1px solid #ACA899;box-sizing:border-box"></div>
<div style="left:527px;top:301px;width:7px;height:1px;background:#ACA899"></div>
<div style="left:528px;top:302px;width:5px;height:1px;background:#ACA899"></div>
<div style="left:529px;top:303px;width:3px;height:1px;background:#ACA899"></div>
<div style="left:530px;top:304px;width:1px;height:1px;background:#ACA899"></div>
<div class="t" style="left:328px;top:296px;color:#ACA899">Privateinlagen</div>
<div class="fld" style="left:543px;top:292px;width:72px;height:21px;background:#ECE9D8;"></div>
<div class="t" style="right:410px;top:296px;color:#000">0,00 H</div>
<div class="t" style="left:705px;top:296px;">Kostenstelle 1</div>
<div class="fld" style="left:780px;top:292px;width:132px;height:21px;background:#fff;"></div>
<div style="left:895px;top:293px;width:16px;height:19px;background:#ECE9D8;border-left:1px solid #ACA899;box-sizing:border-box"></div>
<div style="left:900px;top:301px;width:7px;height:1px;background:#000"></div>
<div style="left:901px;top:302px;width:5px;height:1px;background:#000"></div>
<div style="left:902px;top:303px;width:3px;height:1px;background:#000"></div>
<div style="left:903px;top:304px;width:1px;height:1px;background:#000"></div>
<div class="t" style="left:177px;top:323px;">Steuersatz</div>
<div class="fld" style="left:245px;top:319px;width:120px;height:21px;background:#fff;"></div>
<div style="left:348px;top:320px;width:16px;height:19px;background:#ECE9D8;border-left:1px solid #ACA899;box-sizing:border-box"></div>
<div style="left:353px;top:328px;width:7px;height:1px;background:#000"></div>
<div style="left:354px;top:329px;width:5px;height:1px;background:#000"></div>
<div style="left:355px;top:330px;width:3px;height:1px;background:#000"></div>
<div style="left:356px;top:331px;width:1px;height:1px;background:#000"></div>
<div class="t" style="left:249px;top:323px;color:#000">VSt. normal</div>
<div class="fld" style="left:369px;top:319px;width:90px;height:21px;background:#ECE9D8;"></div>
<div class="t" style="right:566px;top:323px;color:#000">16,00%</div>
<div class="fld" style="left:462px;top:319px;width:77px;height:21px;background:#ECE9D8;"></div>
<div class="t" style="right:486px;top:323px;color:#000">13,66</div>
<div class="t" style="left:705px;top:323px;">Kostenstelle 2</div>
<div class="fld" style="left:780px;top:319px;width:132px;height:21px;background:#fff;"></div>
<div style="left:895px;top:320px;width:16px;height:19px;background:#ECE9D8;border-left:1px solid #ACA899;box-sizing:border-box"></div>
<div style="left:900px;top:328px;width:7px;height:1px;background:#000"></div>
<div style="left:901px;top:329px;width:5px;height:1px;background:#000"></div>
<div style="left:902px;top:330px;width:3px;height:1px;background:#000"></div>
<div style="left:903px;top:331px;width:1px;height:1px;background:#000"></div>
<div class="t" style="left:177px;top:367px;">AfA-Konto</div>
<div class="fld" style="left:246px;top:363px;width:75px;height:21px;background:#fff;"></div>
<div style="left:304px;top:364px;width:16px;height:19px;background:#ECE9D8;border-left:1px solid #ACA899;box-sizing:border-box"></div>
<div style="left:309px;top:372px;width:7px;height:1px;background:#000"></div>
<div style="left:310px;top:373px;width:5px;height:1px;background:#000"></div>
<div style="left:311px;top:374px;width:3px;height:1px;background:#000"></div>
<div style="left:312px;top:375px;width:1px;height:1px;background:#000"></div>
<div class="t" style="left:250px;top:367px;color:#000">4830</div>
<div class="fld" style="left:324px;top:363px;width:215px;height:21px;background:#ECE9D8;"></div>
<div style="left:326px;top:365px;width:195px;height:17px;background:#ECE9D8;border:1px solid #F3F1E6;box-sizing:border-box"></div>
<div style="left:522px;top:364px;width:16px;height:19px;background:#ECE9D8;border-left:1px solid #ACA899;box-sizing:border-box"></div>
<div style="left:527px;top:372px;width:7px;height:1px;background:#ACA899"></div>
<div style="left:528px;top:373px;width:5px;height:1px;background:#ACA899"></div>
<div style="left:529px;top:374px;width:3px;height:1px;background:#ACA899"></div>
<div style="left:530px;top:375px;width:1px;height:1px;background:#ACA899"></div>
<div class="t" style="left:328px;top:367px;color:#ACA899">Abschreibungen auf Sachanlagen</div>
<div class="fld" style="left:543px;top:363px;width:72px;height:21px;background:#ECE9D8;"></div>
<div class="t" style="right:410px;top:367px;color:#000">28,45 S</div>
<div class="t" style="left:177px;top:394px;">Nutzungsdauer in Jahren</div>
<div class="fld" style="left:297px;top:389px;width:24px;height:20px;background:#fff;"></div>
<div class="t" style="right:704px;top:393px;color:#000">3</div>
<div class="t" style="left:332px;top:394px;">Abschreibungsart</div>
<div class="fld" style="left:429px;top:389px;width:110px;height:20px;background:#fff;"></div>
<div style="left:522px;top:390px;width:16px;height:18px;background:#ECE9D8;border-left:1px solid #ACA899;box-sizing:border-box"></div>
<div style="left:527px;top:397px;width:7px;height:1px;background:#000"></div>
<div style="left:528px;top:398px;width:5px;height:1px;background:#000"></div>
<div style="left:529px;top:399px;width:3px;height:1px;background:#000"></div>
<div style="left:530px;top:400px;width:1px;height:1px;background:#000"></div>
<div class="t" style="left:433px;top:393px;color:#000">Linear</div>
<div class="fld" style="left:543px;top:389px;width:26px;height:20px;background:#ECE9D8;"></div>
<div class="t" style="left:573px;top:394px;">% degr.</div>
<div class="t" style="left:177px;top:411px;">0 = GWG</div>
<div class="bb" style="left:168px;top:436px;width:744px;height:16px;"></div>
<div class="t" style="left:178px;top:438px;color:#fff">Ihre Anlagebuchung:</div>
<div class="hdr" style="left:168px;top:452px;width:744px;height:21px;"></div>
<div style="left:247px;top:455px;width:1px;height:15px;background:#C7C5B2"></div>
<div style="left:248px;top:455px;width:1px;height:15px;background:#fff"></div>
<div style="left:317px;top:455px;width:1px;height:15px;background:#C7C5B2"></div>
<div style="left:318px;top:455px;width:1px;height:15px;background:#fff"></div>
<div style="left:467px;top:455px;width:1px;height:15px;background:#C7C5B2"></div>
<div style="left:468px;top:455px;width:1px;height:15px;background:#fff"></div>
<div style="left:527px;top:455px;width:1px;height:15px;background:#C7C5B2"></div>
<div style="left:528px;top:455px;width:1px;height:15px;background:#fff"></div>
<div style="left:587px;top:455px;width:1px;height:15px;background:#C7C5B2"></div>
<div style="left:588px;top:455px;width:1px;height:15px;background:#fff"></div>
<div style="left:667px;top:455px;width:1px;height:15px;background:#C7C5B2"></div>
<div style="left:668px;top:455px;width:1px;height:15px;background:#fff"></div>
<div style="left:747px;top:455px;width:1px;height:15px;background:#C7C5B2"></div>
<div style="left:748px;top:455px;width:1px;height:15px;background:#fff"></div>
<div style="left:817px;top:455px;width:1px;height:15px;background:#C7C5B2"></div>
<div style="left:818px;top:455px;width:1px;height:15px;background:#fff"></div>
<div style="left:907px;top:455px;width:1px;height:15px;background:#C7C5B2"></div>
<div style="left:908px;top:455px;width:1px;height:15px;background:#fff"></div>
<div class="t" style="left:174px;top:457px;">Belegdatum</div>
<div class="t" style="right:710px;top:457px;">Belegnr.</div>
<div class="t" style="left:324px;top:457px;">Buchungstext</div>
<div class="t" style="right:499px;top:457px;">Brutto</div>
<div class="t" style="right:439px;top:457px;">Netto</div>
<div class="t" style="right:359px;top:457px;">Soll-Konto</div>
<div class="t" style="right:279px;top:457px;">Haben-Konto</div>
<div class="t" style="left:754px;top:457px;">USt-Bez.</div>
<div class="t" style="right:118px;top:457px;">Steuerbetrag</div>
<div style="left:168px;top:473px;width:744px;height:37px;background:#fff"></div>
<div style="left:248px;top:486px;width:664px;height:1px;background:#EBE8DA"></div>
<div style="left:168px;top:500px;width:744px;height:1px;background:#EBE8DA"></div>
<div style="left:248px;top:473px;width:1px;height:37px;background:#EBE8DA"></div>
<div style="left:318px;top:473px;width:1px;height:37px;background:#EBE8DA"></div>
<div style="left:468px;top:473px;width:1px;height:37px;background:#EBE8DA"></div>
<div style="left:528px;top:473px;width:1px;height:37px;background:#EBE8DA"></div>
<div style="left:588px;top:473px;width:1px;height:37px;background:#EBE8DA"></div>
<div style="left:668px;top:473px;width:1px;height:37px;background:#EBE8DA"></div>
<div style="left:748px;top:473px;width:1px;height:37px;background:#EBE8DA"></div>
<div style="left:818px;top:473px;width:1px;height:37px;background:#EBE8DA"></div>
<div style="left:908px;top:473px;width:1px;height:37px;background:#EBE8DA"></div>
<div class="t" style="left:174px;top:474px;">21.04</div>
<div class="t" style="right:709px;top:474px;">00114</div>
<div class="t" style="left:323px;top:474px;">AV 00114 - Barkauf CDR-B...</div>
<div class="t" style="right:498px;top:474px;">99,00</div>
<div class="t" style="right:438px;top:474px;">85,34</div>
<div class="t" style="right:358px;top:474px;">0400</div>
<div class="t" style="right:278px;top:474px;">1890</div>
<div class="t" style="left:753px;top:474px;">VSt. 19%</div>
<div class="t" style="right:118px;top:474px;">13,66</div>
<div class="bb" style="left:168px;top:537px;width:744px;height:16px;"></div>
<div class="t" style="left:177px;top:539px;color:#fff">Automatisch generierte Buchungen des Abschreibungsplans:</div>
<div class="hdr" style="left:168px;top:553px;width:710px;height:20px;"></div>
<div style="left:207px;top:556px;width:1px;height:14px;background:#C7C5B2"></div>
<div style="left:208px;top:556px;width:1px;height:14px;background:#fff"></div>
<div style="left:287px;top:556px;width:1px;height:14px;background:#C7C5B2"></div>
<div style="left:288px;top:556px;width:1px;height:14px;background:#fff"></div>
<div style="left:357px;top:556px;width:1px;height:14px;background:#C7C5B2"></div>
<div style="left:358px;top:556px;width:1px;height:14px;background:#fff"></div>
<div style="left:558px;top:556px;width:1px;height:14px;background:#C7C5B2"></div>
<div style="left:559px;top:556px;width:1px;height:14px;background:#fff"></div>
<div style="left:628px;top:556px;width:1px;height:14px;background:#C7C5B2"></div>
<div style="left:629px;top:556px;width:1px;height:14px;background:#fff"></div>
<div style="left:717px;top:556px;width:1px;height:14px;background:#C7C5B2"></div>
<div style="left:718px;top:556px;width:1px;height:14px;background:#fff"></div>
<div style="left:797px;top:556px;width:1px;height:14px;background:#C7C5B2"></div>
<div style="left:798px;top:556px;width:1px;height:14px;background:#fff"></div>
<div style="left:877px;top:556px;width:1px;height:14px;background:#C7C5B2"></div>
<div style="left:878px;top:556px;width:1px;height:14px;background:#fff"></div>
<div class="t" style="left:174px;top:557px;">Jahr</div>
<div class="t" style="left:214px;top:557px;">Belegdatum</div>
<div class="t" style="right:670px;top:557px;">Belegnr.</div>
<div class="t" style="left:365px;top:557px;">Buchungstext</div>
<div class="t" style="right:399px;top:557px;">AfA-Betrag</div>
<div class="t" style="right:309px;top:557px;">Restbuchwert</div>
<div class="t" style="right:229px;top:557px;">Soll-Konto</div>
<div class="t" style="right:149px;top:557px;">Haben-Konto</div>
<div style="left:168px;top:573px;width:744px;height:117px;background:#fff"></div>
<div style="left:168px;top:586px;width:744px;height:1px;background:#EBE8DA"></div>
<div style="left:168px;top:600px;width:744px;height:1px;background:#EBE8DA"></div>
<div style="left:168px;top:614px;width:744px;height:1px;background:#EBE8DA"></div>
<div style="left:168px;top:628px;width:744px;height:1px;background:#EBE8DA"></div>
<div style="left:168px;top:642px;width:744px;height:1px;background:#EBE8DA"></div>
<div style="left:168px;top:656px;width:744px;height:1px;background:#EBE8DA"></div>
<div style="left:168px;top:670px;width:744px;height:1px;background:#EBE8DA"></div>
<div style="left:168px;top:684px;width:744px;height:1px;background:#EBE8DA"></div>
<div style="left:208px;top:573px;width:1px;height:117px;background:#EBE8DA"></div>
<div style="left:288px;top:573px;width:1px;height:117px;background:#EBE8DA"></div>
<div style="left:358px;top:573px;width:1px;height:117px;background:#EBE8DA"></div>
<div style="left:559px;top:573px;width:1px;height:117px;background:#EBE8DA"></div>
<div style="left:629px;top:573px;width:1px;height:117px;background:#EBE8DA"></div>
<div style="left:718px;top:573px;width:1px;height:117px;background:#EBE8DA"></div>
<div style="left:798px;top:573px;width:1px;height:117px;background:#EBE8DA"></div>
<div style="left:878px;top:573px;width:1px;height:117px;background:#EBE8DA"></div>
<div class="t" style="left:174px;top:574px;">2006</div>
<div class="t" style="left:213px;top:574px;">31.12</div>
<div class="t" style="right:668px;top:574px;">AV 00114</div>
<div class="t" style="left:363px;top:574px;">AfA 01/04 - Barkauf CDR-Brenner</div>
<div class="t" style="right:398px;top:574px;">21,34</div>
<div class="t" style="right:308px;top:574px;">64,00</div>
<div class="t" style="right:228px;top:574px;">4830</div>
<div class="t" style="right:148px;top:574px;">0400</div>
<div class="t" style="left:174px;top:588px;">2007</div>
<div class="t" style="left:213px;top:588px;">31.12</div>
<div class="t" style="right:668px;top:588px;">AV 00114</div>
<div class="t" style="left:363px;top:588px;">AfA 02/04 - Barkauf CDR-Brenner</div>
<div class="t" style="right:398px;top:588px;">28,45</div>
<div class="t" style="right:308px;top:588px;">35,55</div>
<div class="t" style="right:228px;top:588px;">4830</div>
<div class="t" style="right:148px;top:588px;">0400</div>
<div class="t" style="left:174px;top:602px;">2008</div>
<div class="t" style="left:213px;top:602px;">31.12</div>
<div class="t" style="right:668px;top:602px;">AV 00114</div>
<div class="t" style="left:363px;top:602px;">AfA 03/04 - Barkauf CDR-Brenner</div>
<div class="t" style="right:398px;top:602px;">28,45</div>
<div class="t" style="right:308px;top:602px;">7,10</div>
<div class="t" style="right:228px;top:602px;">4830</div>
<div class="t" style="right:148px;top:602px;">0400</div>
<div class="t" style="left:174px;top:616px;">2009</div>
<div class="t" style="left:213px;top:616px;">31.12</div>
<div class="t" style="right:668px;top:616px;">AV 00114</div>
<div class="t" style="left:363px;top:616px;">AfA 04/04 - Barkauf CDR-Brenner</div>
<div class="t" style="right:398px;top:616px;">7,10</div>
<div class="t" style="right:308px;top:616px;">0,00</div>
<div class="t" style="right:228px;top:616px;">4830</div>
<div class="t" style="right:148px;top:616px;">0400</div>
<div class="t" style="left:174px;top:704px;">Bei Abschreibungsart &quot;Individuell&quot; lassen sich die Abschreibungswerte in die Liste selbst eingeben.</div>
<div class="t" style="left:174px;top:717px;">Nach dem Aktualisieren können Sie mit einem Doppelklick das Feld &quot;AfA-Betrag&quot; editieren.</div>
<div class="btn" style="left:695px;top:714px;width:75px;height:21px;background:#ECE9D8;"></div>
<div class="t" style="left:695px;width:75px;text-align:center;top:718px;"><u>H</u>ilfe</div>
<div class="btn def" style="left:777px;top:714px;width:65px;height:21px;background:#ECE9D8;"></div>
<div class="t" style="left:777px;width:65px;text-align:center;top:718px;"><u>O</u>K</div>
<div class="btn" style="left:849px;top:714px;width:63px;height:21px;background:#ECE9D8;"></div>
<div class="t" style="left:849px;width:63px;text-align:center;top:718px;">Abbrechen</div></div></body></html>
